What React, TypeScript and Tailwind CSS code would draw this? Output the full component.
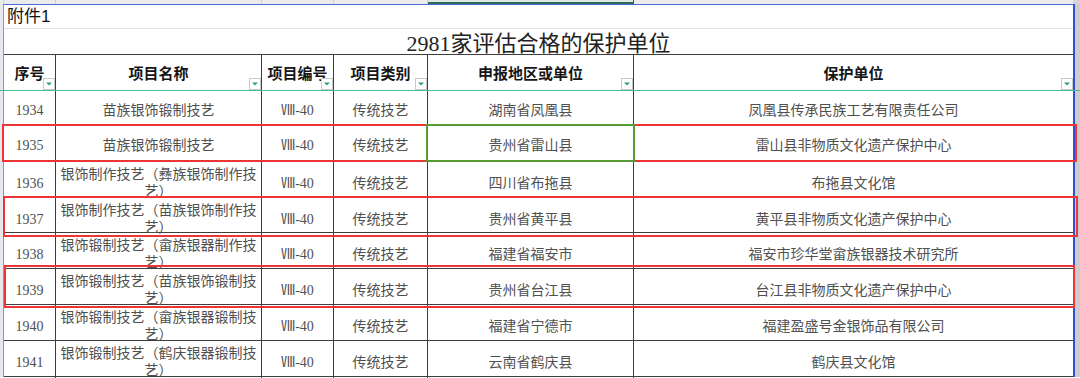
import React from 'react';

type Row = {
  no: string;
  name: string;
  region: string;
  unit: string;
  h: string;
};

const rows: Row[] = [
  { no: '1934', name: '苗族银饰锻制技艺', region: '湖南省凤凰县', unit: '凤凰县传承民族工艺有限责任公司', h: 'h-[35px]' },
  { no: '1935', name: '苗族银饰锻制技艺', region: '贵州省雷山县', unit: '雷山县非物质文化遗产保护中心', h: 'h-[36px]' },
  { no: '1936', name: '银饰制作技艺（彝族银饰制作技艺）', region: '四川省布拖县', unit: '布拖县文化馆', h: 'h-[36px]' },
  { no: '1937', name: '银饰制作技艺（苗族银饰制作技艺）', region: '贵州省黄平县', unit: '黄平县非物质文化遗产保护中心', h: 'h-[35px]' },
  { no: '1938', name: '银饰锻制技艺（畲族银器制作技艺）', region: '福建省福安市', unit: '福安市珍华堂畲族银器技术研究所', h: 'h-[36px]' },
  { no: '1939', name: '银饰锻制技艺（苗族银饰锻制技艺）', region: '贵州省台江县', unit: '台江县非物质文化遗产保护中心', h: 'h-[36px]' },
  { no: '1940', name: '银饰锻制技艺（畲族银器锻制技艺）', region: '福建省宁德市', unit: '福建盈盛号金银饰品有限公司', h: 'h-[36px]' },
  { no: '1941', name: '银饰锻制技艺（鹤庆银器锻制技艺）', region: '云南省鹤庆县', unit: '鹤庆县文化馆', h: 'h-[36px]' },
];

const cols = 'grid grid-cols-[52px_206px_72px_94px_206px_1fr]';
const serif = 'font-["Liberation_Serif","Noto_Sans_CJK_SC",serif]';

function Filter() {
  return (
    <span className="absolute bottom-0 right-0 flex h-[12px] w-[12px] items-center justify-center border border-[#c9c9c9] bg-white">
      <svg width="6" height="4" viewBox="0 0 6 4">
        <path d="M0 0.5h6L3 3.5z" fill="#2ba36b" />
      </svg>
    </span>
  );
}

function Head({ label, last }: { label: string; last?: boolean }) {
  return (
    <div
      className={`relative flex items-center justify-center pt-[4px] text-[15px] font-bold text-[#161616] ${
        last ? '' : 'border-r border-[#3e3e3e]'
      }`}
    >
      {label}
      <Filter />
    </div>
  );
}

function Cell({ children, last }: { children: React.ReactNode; last?: boolean }) {
  return (
    <div
      className={`flex items-center justify-center px-[3px] pt-[4px] text-center text-[14px] leading-[17px] text-[#505050] ${
        last ? '' : 'border-r border-[#3e3e3e]'
      }`}
    >
      <span>{children}</span>
    </div>
  );
}

export default function App() {
  return (
    <div className={`relative h-[378px] w-[1080px] overflow-hidden bg-white ${serif}`}>
      {/* sheet column header strip */}
      <div className="flex h-[4px] bg-[#ebebeb]">
        <div className="w-[4px] border-r border-[#d0d0d0]" />
        <div className={`${cols} w-[1069px]`}>
          <div className="border-r border-[#cfcfcf]" />
          <div className="border-r border-[#cfcfcf]" />
          <div className="border-r border-[#cfcfcf]" />
          <div className="border-r border-[#cfcfcf]" />
          <div className="border-b-2 border-r border-[#2f6b55] bg-[#dfe7e3]" />
          <div />
        </div>
        <div className="flex-1 bg-[#d4d4d4]" />
      </div>

      <div className="flex">
        <div className="w-[3px] bg-[#e7e7ef]" />
        <div className="w-[1072px] border-l border-r-2 border-t border-l-[#7d94e2] border-r-[#2f50d6] border-t-[#4a6ddc]">
          <div className='flex h-[24px] items-center border-b border-[#e3e3e3] pl-[3px] font-["Liberation_Sans","Noto_Sans_CJK_SC",sans-serif] text-[17px] text-[#111]'>
            附件1
          </div>
          <div className="flex h-[26px] items-center justify-center border-b border-[#3e3e3e] pt-[4px] text-[22px] leading-[22px] text-[#222]">
            2981家评估合格的保护单位
          </div>
          <div className={`${cols} h-[36px] border-b border-[#43c08f]`}>
            <Head label="序号" />
            <Head label="项目名称" />
            <Head label="项目编号" />
            <Head label="项目类别" />
            <Head label="申报地区或单位" />
            <Head label="保护单位" last />
          </div>
          {rows.map((r) => (
            <div key={r.no} className={`${cols} ${r.h} border-b border-[#3e3e3e]`}>
              <Cell>{r.no}</Cell>
              <Cell>{r.name}</Cell>
              <Cell>Ⅷ-40</Cell>
              <Cell>传统技艺</Cell>
              <Cell>{r.region}</Cell>
              <Cell last>{r.unit}</Cell>
            </div>
          ))}
        </div>
        <div className="w-[5px] bg-[#cdcdcd]" />
      </div>

      {/* frozen pane line */}
      <div className="absolute left-0 top-[90px] h-px w-full bg-[#43c08f]" />

      {/* red annotation boxes */}
      <div className="absolute left-[2px] top-[124px] h-[38px] w-[1075px] border-2 border-[#ee3535]" />
      <div className="absolute left-[3px] top-[196px] h-[41px] w-[1075px] border-2 border-[#ee3535]" />
      <div className="absolute left-[4px] top-[265px] h-[43px] w-[1071px] border-2 border-[#ee3535]" />

      {/* selected cell */}
      <div className="absolute left-[426px] top-[124px] h-[38px] w-[209px] border-2 border-[#559a33]" />
    </div>
  );
}
